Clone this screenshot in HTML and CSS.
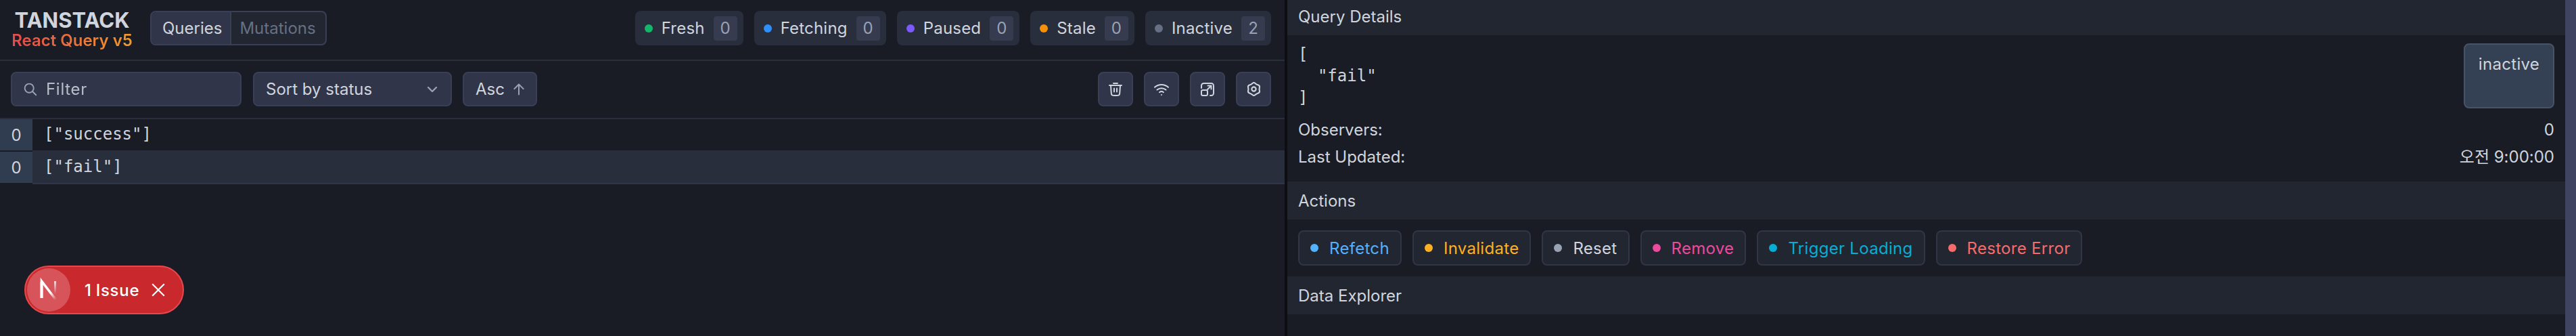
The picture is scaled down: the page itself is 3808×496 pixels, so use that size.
FILE: index.html
```html
<!DOCTYPE html>
<html lang="en">
<head>
<meta charset="utf-8">
<title>TanStack Query Devtools</title>
<link rel="stylesheet" href="styles.css">
</head>
<body>
<div class="devtools">
  <main class="left">
    <header class="top">
      <div class="brand">
        <div class="brand-name">TANSTACK</div>
        <div class="brand-sub">React Query v5</div>
      </div>
      <div class="tabs">
        <div class="tab tab-on">Queries</div>
        <div class="tab">Mutations</div>
      </div>
      <div class="chips">
        <div class="chip"><i class="dot fresh"></i><span>Fresh</span><b class="count">0</b></div>
        <div class="chip"><i class="dot fetching"></i><span>Fetching</span><b class="count">0</b></div>
        <div class="chip"><i class="dot paused"></i><span>Paused</span><b class="count">0</b></div>
        <div class="chip"><i class="dot stale"></i><span>Stale</span><b class="count">0</b></div>
        <div class="chip"><i class="dot inactive"></i><span>Inactive</span><b class="count">2</b></div>
      </div>
    </header>
    <div class="toolbar">
      <div class="filter">
        <svg class="ico-search" viewBox="0 0 24 24" fill="none" stroke="currentColor" stroke-width="2.2" stroke-linecap="round"><circle cx="10.5" cy="10.5" r="7.5"/><path d="M16 16l6 6"/></svg>
        <span>Filter</span>
      </div>
      <div class="select">
        <span>Sort by status</span>
        <svg class="ico-chev" viewBox="0 0 24 24" fill="none" stroke="currentColor" stroke-width="2.4" stroke-linecap="round" stroke-linejoin="round"><path d="M6 9l6 6 6-6"/></svg>
      </div>
      <div class="asc">
        <span>Asc</span>
        <svg class="ico-arrow" viewBox="0 0 24 24" fill="none" stroke="currentColor" stroke-width="2.4" stroke-linecap="round" stroke-linejoin="round"><path d="M12 21V3M4 11l8-8 8 8"/></svg>
      </div>
      <div class="tools">
        <div class="tool"><svg viewBox="0 0 24 24" fill="none" stroke="currentColor" stroke-width="2" stroke-linecap="round" stroke-linejoin="round"><path d="M9 3h6M3 6h18m-2 0-.7 10.5c-.1 1.6-.16 2.4-.5 3a3 3 0 0 1-1.3 1.2c-.62.3-1.4.3-3 .3h-3c-1.6 0-2.4 0-3-.3a3 3 0 0 1-1.3-1.2c-.34-.6-.4-1.4-.5-3L5 6m5 4.5v5m4-5v5"/></svg></div>
        <div class="tool"><svg viewBox="0 0 24 24" fill="none" stroke="currentColor" stroke-width="2" stroke-linecap="round" stroke-linejoin="round"><path d="M2 8.8a15 15 0 0 1 20 0M5.500 12.600a10 10 0 0 1 13 0M9 16.200a5 5 0 0 1 6 0M12 20h.01"/></svg></div>
        <div class="tool"><svg viewBox="0 0 24 24" fill="none" stroke="currentColor" stroke-width="2" stroke-linecap="round" stroke-linejoin="round"><path d="M3 10V6.500A3.500 3.500 0 0 1 6.500 3H17.500A3.500 3.500 0 0 1 21 6.500V17.500A3.500 3.500 0 0 1 17.500 21H16M12 12l5.500-5.500m0 0h-5M17.500 6.500v5"/><rect x="3" y="13" width="9" height="8" rx="2"/></svg></div>
        <div class="tool"><svg class="ico-gear" viewBox="0 0 24 24" fill="none" stroke="currentColor" stroke-width="2" stroke-linecap="round" stroke-linejoin="round"><path d="M13.875 3.750Q15.750 5.500 18.200 6.250Q20.660 7 20.080 9.500Q19.500 12 20.080 14.500Q20.660 17 18.200 17.750Q15.750 18.500 13.875 20.250Q12 22 10.125 20.250Q8.250 18.500 5.800 17.750Q3.340 17 3.920 14.500Q4.500 12 3.920 9.500Q3.340 7 5.800 6.250Q8.250 5.500 10.125 3.750Q12 2 13.875 3.750Z"/><circle cx="12" cy="12" r="3"/></svg></div>
      </div>
    </div>
    <div class="list">
      <div class="row"><div class="badge">0</div><code class="key">["success"]</code></div>
      <div class="row row-on"><div class="badge">0</div><code class="key">["fail"]</code></div>
    </div>
  </main>
  <div class="split"></div>
  <aside class="right">
    <h2 class="section section-first">Query Details</h2>
    <div class="details">
      <div class="key-row">
        <pre class="json">[
  "fail"
]</pre>
        <div class="status">inactive</div>
      </div>
      <div class="stat"><span>Observers:</span><span>0</span></div>
      <div class="stat"><span>Last Updated:</span><span class="time">오전 9:00:00</span></div>
    </div>
    <h2 class="section">Actions</h2>
    <div class="actions">
      <div class="act c-blue"><i class="adot"></i>Refetch</div>
      <div class="act c-yellow"><i class="adot"></i>Invalidate</div>
      <div class="act c-gray"><i class="adot"></i>Reset</div>
      <div class="act c-pink"><i class="adot"></i>Remove</div>
      <div class="act c-cyan"><i class="adot"></i>Trigger Loading</div>
      <div class="act c-red"><i class="adot"></i>Restore Error</div>
    </div>
    <h2 class="section">Data Explorer</h2>
  </aside>
  <div class="scrollbar"></div>
</div>
<div class="toast">
  <div class="logo"><svg viewBox="0 0 40 40" fill="none">
    <defs>
      <linearGradient id="nDiag" gradientUnits="userSpaceOnUse" x1="10" y1="8" x2="31" y2="34"><stop offset=".6" stop-color="#fff"/><stop offset="1" stop-color="#fff" stop-opacity="0"/></linearGradient>
      <linearGradient id="nStem" gradientUnits="userSpaceOnUse" x1="29" y1="7" x2="29" y2="26"><stop offset="0" stop-color="#fff" stop-opacity=".8"/><stop offset="1" stop-color="#fff" stop-opacity="0"/></linearGradient>
    </defs>
    <path d="M9.500 32V7L31 35" stroke="url(#nDiag)" stroke-width="3.600"/>
    <path d="M9.500 32V8" stroke="#fff" stroke-width="4"/>
    <path d="M29.500 7V26" stroke="url(#nStem)" stroke-width="3"/>
  </svg></div>
  <span class="toast-text">1 Issue</span>
  <svg class="toast-x" viewBox="0 0 20 20" fill="none" stroke="#fff" stroke-width="2"><path d="M2 2l16 16M18 2L2 18"/></svg>
</div>
</body>
</html>
```
FILE: styles.css
```css
* { box-sizing: border-box; }
html, body { margin: 0; height: 100%; background: #191c24; overflow: hidden; }
body { font-family: Inter, "Noto Sans CJK KR", sans-serif; color: #d0d5dd; position: relative; }

.devtools { display: flex; height: 496px; }
.left { width: 1899px; display: flex; flex-direction: column; }
.split { width: 4px; background: #0c0e12; }
.right { flex: 1; display: flex; flex-direction: column; overflow: hidden; }
.scrollbar { width: 16px; background: #3f4560; }

.top { height: 90px; padding: 16px 20px 0 16px; border-bottom: 2px solid #292e3d; display: flex; align-items: flex-start; }
.brand { width: 181px; margin-right: 25px; height: 51px; display: flex; flex-direction: column; align-items: center; }
.brand-name { font-size: 31px; font-weight: 700; line-height: 28px; color: #d0d5dd; }
.brand-sub { margin-top: 1px; font-size: 24px; font-weight: 600; line-height: 30px; white-space: nowrap; background: linear-gradient(90deg, #e5484d, #f09a2a); -webkit-background-clip: text; background-clip: text; color: transparent; }

.tabs { display: flex; height: 51px; border: 2px solid #394056; border-radius: 8px; background: #222631; overflow: hidden; font-size: 24px; }
.tab { display: flex; align-items: center; padding: 0 12px 0 16px; color: #667085; }
.tab-on { background: #303549; color: #d0d5dd; border-right: 2px solid #394056; }
.tab + .tab { padding: 0 14px 0 12px; }

.chips { margin-left: auto; display: flex; gap: 16px; }
.chip { height: 51px; display: flex; align-items: center; background: #292e3d; border-radius: 8px; padding: 0 9px 0 14px; font-size: 24px; color: #d0d5dd; }
.chip span { margin: 0 13px; letter-spacing: .2px; }
.dot { width: 12px; height: 12px; border-radius: 50%; display: block; }
.fresh { background: #12b76a; }
.fetching { background: #2e90fa; }
.paused { background: #7a5af8; }
.stale { background: #f79009; }
.inactive { background: #667085; }
.count { width: 35px; height: 36px; display: flex; align-items: center; justify-content: center; background: #363b50; border-radius: 4px; font-weight: 400; font-size: 24px; color: #98a2b3; }

.toolbar { height: 86px; padding: 16px 20px 0 16px; border-bottom: 2px solid #292e3d; display: flex; align-items: flex-start; }
.filter, .select, .asc, .tool { height: 51px; background: #303549; border: 2px solid #394056; border-radius: 8px; display: flex; align-items: center; font-size: 24px; color: #d0d5dd; }
.filter { width: 341px; padding-left: 16px; gap: 13px; }
.filter span { opacity: .85; letter-spacing: .7px; }
.ico-search { width: 21px; height: 21px; color: #98a2b3; }
.select { width: 294px; margin-left: 17px; padding: 0 15px 0 17px; justify-content: space-between; }
.ico-chev { width: 24px; height: 24px; color: #98a2b3; }
.asc { width: 110px; margin-left: 16px; padding: 0 15px 0 17px; justify-content: space-between; }
.ico-arrow { width: 20px; height: 20px; color: #98a2b3; }
.tools { margin-left: auto; display: flex; gap: 16px; }
.tool { width: 52px; justify-content: center; }
.tool svg { width: 24px; height: 24px; }
.tool .ico-gear { width: 25px; height: 25px; }

.list { display: flex; flex-direction: column; }
.row { height: 48px; display: flex; }
.badge { width: 48px; height: 46px; background: #303c50; display: flex; align-items: center; justify-content: center; font-size: 24px; color: #d0d5dd; }
.key { flex: 1; display: flex; align-items: center; height: 48px; padding: 0 0 2px 17px; border-bottom: 2px solid #292e3d; font-family: "DejaVu Sans Mono", monospace; font-size: 24px; color: #d0d5dd; }
.row-on .key { background: #292e3d; border-bottom-color: #303549; }

.section { margin: 0; height: 56px; flex: none; padding: 0 16px; display: flex; align-items: center; background: #222631; font-size: 24px; font-weight: 400; color: #d0d5dd; }
.section-first { margin-top: -4px; }
.details { height: 216px; padding: 12px 16px 0; flex: none; }
.key-row { display: flex; justify-content: space-between; height: 96px; margin-bottom: 12px; }
.json { margin: 0; font-family: "DejaVu Sans Mono", monospace; font-size: 24px; line-height: 32px; color: #d0d5dd; }
.status { width: 134px; height: 96px; background: #344054; border: 2px solid #475467; border-radius: 8px; font-size: 24px; line-height: 29px; letter-spacing: .3px; text-align: center; padding-top: 14px; }
.stat { display: flex; justify-content: space-between; font-size: 24px; line-height: 40px; }
.actions { height: 84px; flex: none; padding: 16px; display: flex; gap: 16px; }
.act { height: 52px; padding: 0 16px; border: 2px solid #303645; border-radius: 8px; background: #222631; display: flex; align-items: center; gap: 16px; font-size: 24px; letter-spacing: .3px; }
.adot { width: 12px; height: 12px; border-radius: 50%; background: currentColor; display: block; }
.c-blue { color: #53b1fd; }
.c-yellow { color: #fdb022; }
.c-gray { color: #d0d5dd; }
.c-gray .adot { background: #98a2b3; }
.c-pink { color: #ec4a9c; }
.c-cyan { color: #06aed4; }
.c-red { color: #f76b6b; }

.toast { position: absolute; left: 36px; top: 392px; width: 236px; height: 72px; border-radius: 36px; background: #c9282d; border: 2px solid #e5484d; display: flex; align-items: center; color: #fff; }
.logo { width: 64px; height: 64px; margin-left: 2px; border-radius: 50%; background: #d6545a; display: flex; align-items: center; justify-content: center; }
.logo svg { width: 40px; height: 40px; }
.toast-text { margin-left: 21px; font-size: 24px; font-weight: 500; letter-spacing: .7px; word-spacing: -1px; }
.toast-x { margin-left: 17px; width: 22px; height: 22px; }
```
